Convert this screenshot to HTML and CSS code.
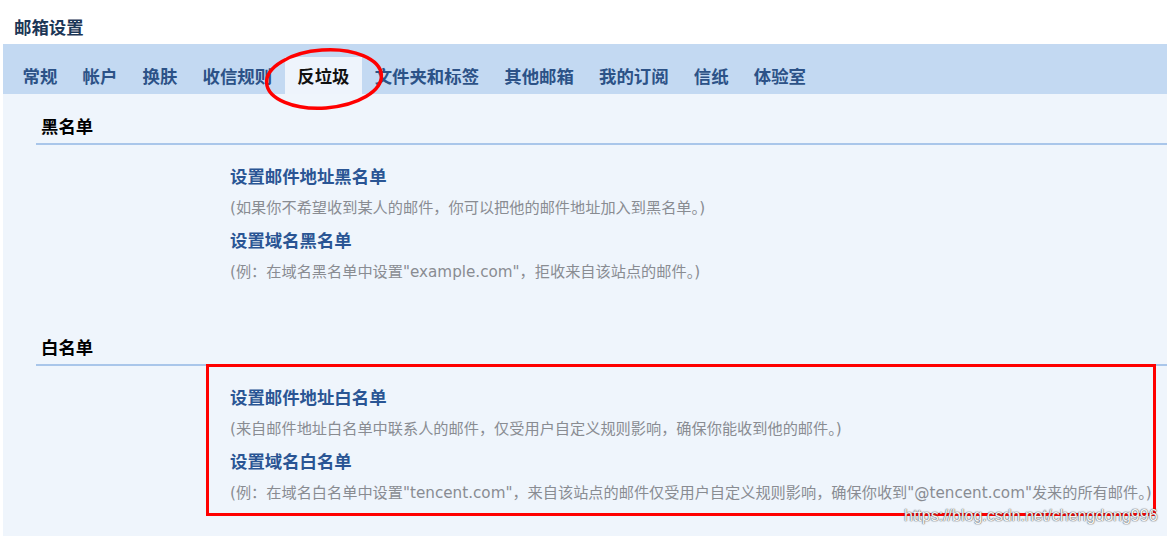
FILE: index.html
```html
<!DOCTYPE html>
<html lang="zh-CN">
<head>
<meta charset="utf-8">
<title>邮箱设置</title>
<link rel="stylesheet" href="styles.css">
</head>
<body>
<div class="page">
  <h1 class="title">邮箱设置</h1>
  <div class="panel">
    <ul class="tabs">
      <li class="tab">常规</li>
      <li class="tab">帐户</li>
      <li class="tab">换肤</li>
      <li class="tab">收信规则</li>
      <li class="tab tab-active">反垃圾</li>
      <li class="tab">文件夹和标签</li>
      <li class="tab">其他邮箱</li>
      <li class="tab">我的订阅</li>
      <li class="tab">信纸</li>
      <li class="tab">体验室</li>
    </ul>
    <div class="content">
      <section class="group">
        <h2 class="group-head">黑名单</h2>
        <div class="items">
          <div class="item-title">设置邮件地址黑名单</div>
          <p class="item-desc">(如果你不希望收到某人的邮件，你可以把他的邮件地址加入到黑名单。)</p>
          <div class="item-title">设置域名黑名单</div>
          <p class="item-desc">(例：在域名黑名单中设置"example.com"，拒收来自该站点的邮件。)</p>
        </div>
      </section>
      <section class="group">
        <h2 class="group-head">白名单</h2>
        <div class="items">
          <div class="item-title">设置邮件地址白名单</div>
          <p class="item-desc">(来自邮件地址白名单中联系人的邮件，仅受用户自定义规则影响，确保你能收到他的邮件。)</p>
          <div class="item-title">设置域名白名单</div>
          <p class="item-desc">(例：在域名白名单中设置"tencent.com"，来自该站点的邮件仅受用户自定义规则影响，确保你收到"@tencent.com"发来的所有邮件。)</p>
        </div>
      </section>
    </div>
  </div>
  <svg class="mark-ellipse" viewBox="0 0 124 68" width="124" height="68" aria-hidden="true">
    <ellipse cx="62" cy="34" rx="57.5" ry="29" transform="rotate(-4 62 34)" fill="none" stroke="#f00" stroke-width="3.5"/>
  </svg>
  <div class="mark-box"></div>
  <div class="watermark">https://blog.csdn.net/chengdong996</div>
</div>
</body>
</html>
```
FILE: styles.css
```css
html, body {
  margin: 0;
  padding: 0;
  background: #ffffff;
}
.page {
  position: relative;
  width: 1167px;
  height: 536px;
  overflow: hidden;
  font-family: "Noto Sans CJK SC", sans-serif;
}
.title {
  margin: 0;
  height: 44px;
  box-sizing: border-box;
  padding: 12px 0 0 14px;
  line-height: 30px;
  font-size: 17.4px;
  font-weight: 700;
  color: #1c3656;
}
.panel {
  margin-left: 3px;
}
.tabs {
  display: flex;
  margin: 0;
  padding: 13px 0 0 7px;
  list-style: none;
  background: #c3d9f2;
}
.tab {
  padding: 0 12.6px;
  line-height: 37px;
  font-size: 17.4px;
  font-weight: 700;
  color: #2c5287;
}
.tab-active {
  background: #eef4fc;
  color: #111111;
}
.content {
  background: #eff5fc;
  height: 442px;
  overflow: hidden;
}
.group {
  padding-top: 14px;
}
.group-head {
  margin: 0 0 0 33px;
  padding-left: 5px;
  line-height: 35px;
  border-bottom: 2px solid #a9c6ea;
  font-size: 17.4px;
  font-weight: 700;
  color: #000000;
}
.items {
  padding: 15px 0 27px 227px;
}
.item-title {
  line-height: 32px;
  font-size: 17.4px;
  font-weight: 700;
  color: #2a5594;
}
.item-desc {
  margin: 0;
  line-height: 32px;
  font-family: "DejaVu Sans", "Noto Sans CJK SC", sans-serif;
  font-size: 15.2px;
  color: #898c92;
  white-space: nowrap;
}
.mark-ellipse {
  position: absolute;
  left: 262px;
  top: 45px;
}
.mark-box {
  position: absolute;
  left: 206px;
  top: 364px;
  width: 950px;
  height: 152px;
  box-sizing: border-box;
  border: 3px solid #ff0000;
}
.watermark {
  position: absolute;
  left: 904px;
  top: 505px;
  font-family: "Liberation Sans", sans-serif;
  font-size: 16px;
  line-height: 22px;
  color: rgba(255, 255, 255, 0.95);
  text-shadow: 0 0 1px rgba(70, 70, 70, 0.85), 0 0 1px rgba(70, 70, 70, 0.7), 0 0 2px rgba(70, 70, 70, 0.3);
  white-space: nowrap;
}
```
